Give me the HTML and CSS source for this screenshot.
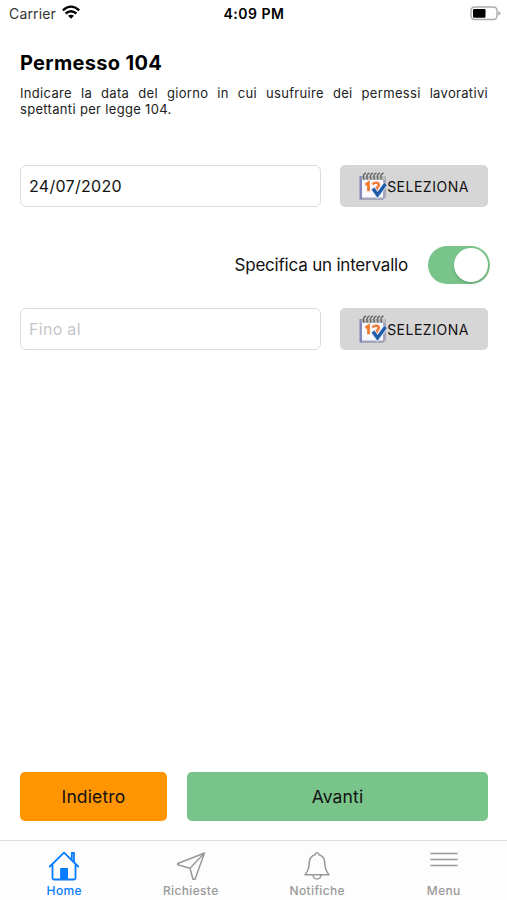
FILE: index.html
```html
<!DOCTYPE html>
<html lang="it">
<head>
<meta charset="utf-8">
<title>Permesso 104</title>
<link rel="stylesheet" href="styles.css">
</head>
<body>
<svg class="defs" aria-hidden="true">
  <symbol id="calendar" viewBox="0 0 28 28">
    <path d="M3 4h24v21l-3 3H2V24z" fill="#a3a5b8"/>
    <path d="M.5 4H3v23.500H.5z" fill="#8287bb"/>
    <path d="M3 4h21v21.500H3z" fill="#f8f8ff"/>
    <path d="M2.500 4h24v4h-24z" fill="#bdbdbd"/>
    <path d="M5 7.500q-2-5 2-6.500M8.500 7.500q-2-5 2-6.500M12 7.500q-2-5 2-6.500M15.500 7.500q-2-5 2-6.500M19 7.500q-2-5 2-6.500M22.500 7.500q-2-5 2-6.500" fill="none" stroke="#666" stroke-width="1.500"/>
    <path d="M6.500 12.800l3-2v8.500" fill="none" stroke="#f47b32" stroke-width="2.800"/>
    <path d="M13.500 12.500q1-2 4-1.800 3 .5 2 3.300l-4 4.500h4" fill="none" stroke="#f47b32" stroke-width="2.600"/>
    <path d="M14 16.500l4.500 6.500L26.500 12" fill="none" stroke="#dfe6f5" stroke-width="5"/>
    <path d="M14 16.500l4.500 6.500L26.500 12" fill="none" stroke="#1e5aa8" stroke-width="3.300"/>
  </symbol>
</svg>
<div class="app">
  <header class="status">
    <div class="carrier"><span>Carrier</span>
      <svg class="wifi" viewBox="0 0 18 14" fill="none" stroke="#000" stroke-width="2.300"><path d="M.8 5.300Q9-2 17.200 5.300M3.600 8.500Q9 4 14.400 8.500"/><path d="M6 10.800Q9 8.500 12 10.800L9 13.800Z" fill="#000" stroke="none"/></svg>
    </div>
    <div class="time">4:09 PM</div>
    <svg class="battery" viewBox="0 0 31 15"><rect x="1" y="1" width="26" height="12.500" rx="3.500" fill="#fff" stroke="#aaa" stroke-width="1.400"/><rect x="3" y="3" width="12.500" height="8.800" rx="1" fill="#000"/><path d="M28.300 5q2.200.7 2.200 2.300t-2.200 2.300z" fill="#aaa"/></svg>
  </header>
  <main class="content">
    <h1>Permesso 104</h1>
    <p class="intro">Indicare la data del giorno in cui usufruire dei permessi lavorativi spettanti per legge 104.</p>
    <div class="row">
      <div class="field">24/07/2020</div>
      <button class="select"><svg class="cal"><use href="#calendar"/></svg><span>SELEZIONA</span></button>
    </div>
    <div class="toggle-row"><span>Specifica un intervallo</span><div class="switch"><div class="knob"></div></div></div>
    <div class="row">
      <div class="field empty">Fino al</div>
      <button class="select"><svg class="cal"><use href="#calendar"/></svg><span>SELEZIONA</span></button>
    </div>
    <div class="actions">
      <button class="back">Indietro</button>
      <button class="next">Avanti</button>
    </div>
  </main>
  <nav class="tabs">
    <a class="tab active"><svg viewBox="0 0 32 30" fill="none" stroke="currentColor" stroke-width="1.800" stroke-linejoin="round" stroke-linecap="round"><path d="M1.800 15.500L16 1.700 30.200 15.500M4.500 13.500V27q0 1.500 1.500 1.500h20q1.500 0 1.500-1.500V13.500M23.800 8.500V2h2.200v9"/><path d="M13 17.500h6.500v10.500H13z" fill="currentColor" stroke-width="1"/></svg><span>Home</span></a>
    <a class="tab"><svg viewBox="0 0 32 30" fill="none" stroke="currentColor" stroke-width="1.500" stroke-linejoin="round"><path d="M29.500 2L2.800 12.500V13.800L15 17.200 18 28.300H20ZM15 17.200L29.500 2"/></svg><span>Richieste</span></a>
    <a class="tab"><svg viewBox="0 0 32 30" fill="none" stroke="currentColor" stroke-width="1.500" stroke-linejoin="round"><path d="M4 23.700C9 18 7.500 15 8.500 10 9.300 6 11.500 4.500 14 3.800 14.300 1.200 17.700 1.200 18 3.800 20.500 4.500 22.700 6 23.500 10 24.500 15 23 18 28 23.700ZM12 24q.5 4 4 4t4-4"/></svg><span>Notifiche</span></a>
    <a class="tab"><svg viewBox="0 0 32 30" fill="none" stroke="currentColor" stroke-width="1.500"><path d="M2.500 2.500h27M2.500 8.500h27M2.500 14.500h27"/></svg><span>Menu</span></a>
  </nav>
</div>
</body>
</html>
```
FILE: styles.css
```css
* { box-sizing: border-box; }
body { margin: 0; background: #fff; color: #111; font-family: Inter, "Liberation Sans", sans-serif; }
.defs { display: none; }
.app { display: flex; flex-direction: column; height: 900px; }
.status { display: grid; grid-template-columns: 1fr auto 1fr; align-items: center; height: 27px; padding: 0 6px 0 9px; }
.carrier { display: flex; align-items: center; gap: 6px; font-size: 14px; letter-spacing: .15px; color: #333; }
.wifi { width: 18px; height: 14px; margin-top: -3px; }
.time { margin-left: -2px; font-size: 14px; font-weight: 600; color: #000; letter-spacing: .5px; }
.battery { width: 31px; height: 15px; justify-self: end; }
.content { flex: 1; display: flex; flex-direction: column; padding: 23px 19px 19px 20px; }
h1 { margin: 0; font-size: 20px; line-height: 26px; font-weight: 700; letter-spacing: .32px; color: #000; }
.intro { margin: 9px 0 48px; font-size: 13px; line-height: 16px; letter-spacing: .32px; text-align: justify; color: #222; }
.row { display: grid; grid-template-columns: 301px 148px; justify-content: space-between; height: 42px; }
.field { border: 1.500px solid #dcdcdc; border-radius: 6px; padding: 0 8px; font-size: 16px; line-height: 40px; letter-spacing: .3px; }
.empty { color: #c5c5ca; }
button { font: inherit; color: #111; border: 0; border-radius: 5px; padding: 0; }
.select { display: flex; align-items: center; justify-content: center; background: #d6d6d6; font-size: 14px; letter-spacing: .5px; }
.cal { width: 28px; height: 28px; }
.toggle-row { display: flex; align-items: center; justify-content: flex-end; gap: 20px; height: 38px; margin: 39px -2px 24px 0; font-size: 17px; letter-spacing: -.2px; }
.switch { display: flex; justify-content: flex-end; width: 62px; height: 38px; padding: 2px; border-radius: 19px; background: #79c48a; }
.knob { width: 34px; height: 34px; border-radius: 50%; background: #fff; box-shadow: 0 2px 3px rgba(0,0,0,.15); }
.actions { display: grid; grid-template-columns: 147px 301px; justify-content: space-between; height: 49px; margin-top: auto; font-size: 17.500px; }
.actions button { letter-spacing: .15px; }
.back { background: #ff9500; }
.next { background: #79c48a; }
.tabs { display: grid; grid-template-columns: repeat(4, 1fr); height: 60px; border-top: 1px solid #dedede; background: #fdfdfd; padding-left: 1px; }
.tab { display: flex; flex-direction: column; align-items: center; padding-top: 10px; font-size: 12px; line-height: 16px; font-weight: 500; letter-spacing: .35px; color: #999; }
.tab svg { width: 32px; height: 30px; }
.tab span { margin-top: 2px; }
.active { color: #087bff; }
```
